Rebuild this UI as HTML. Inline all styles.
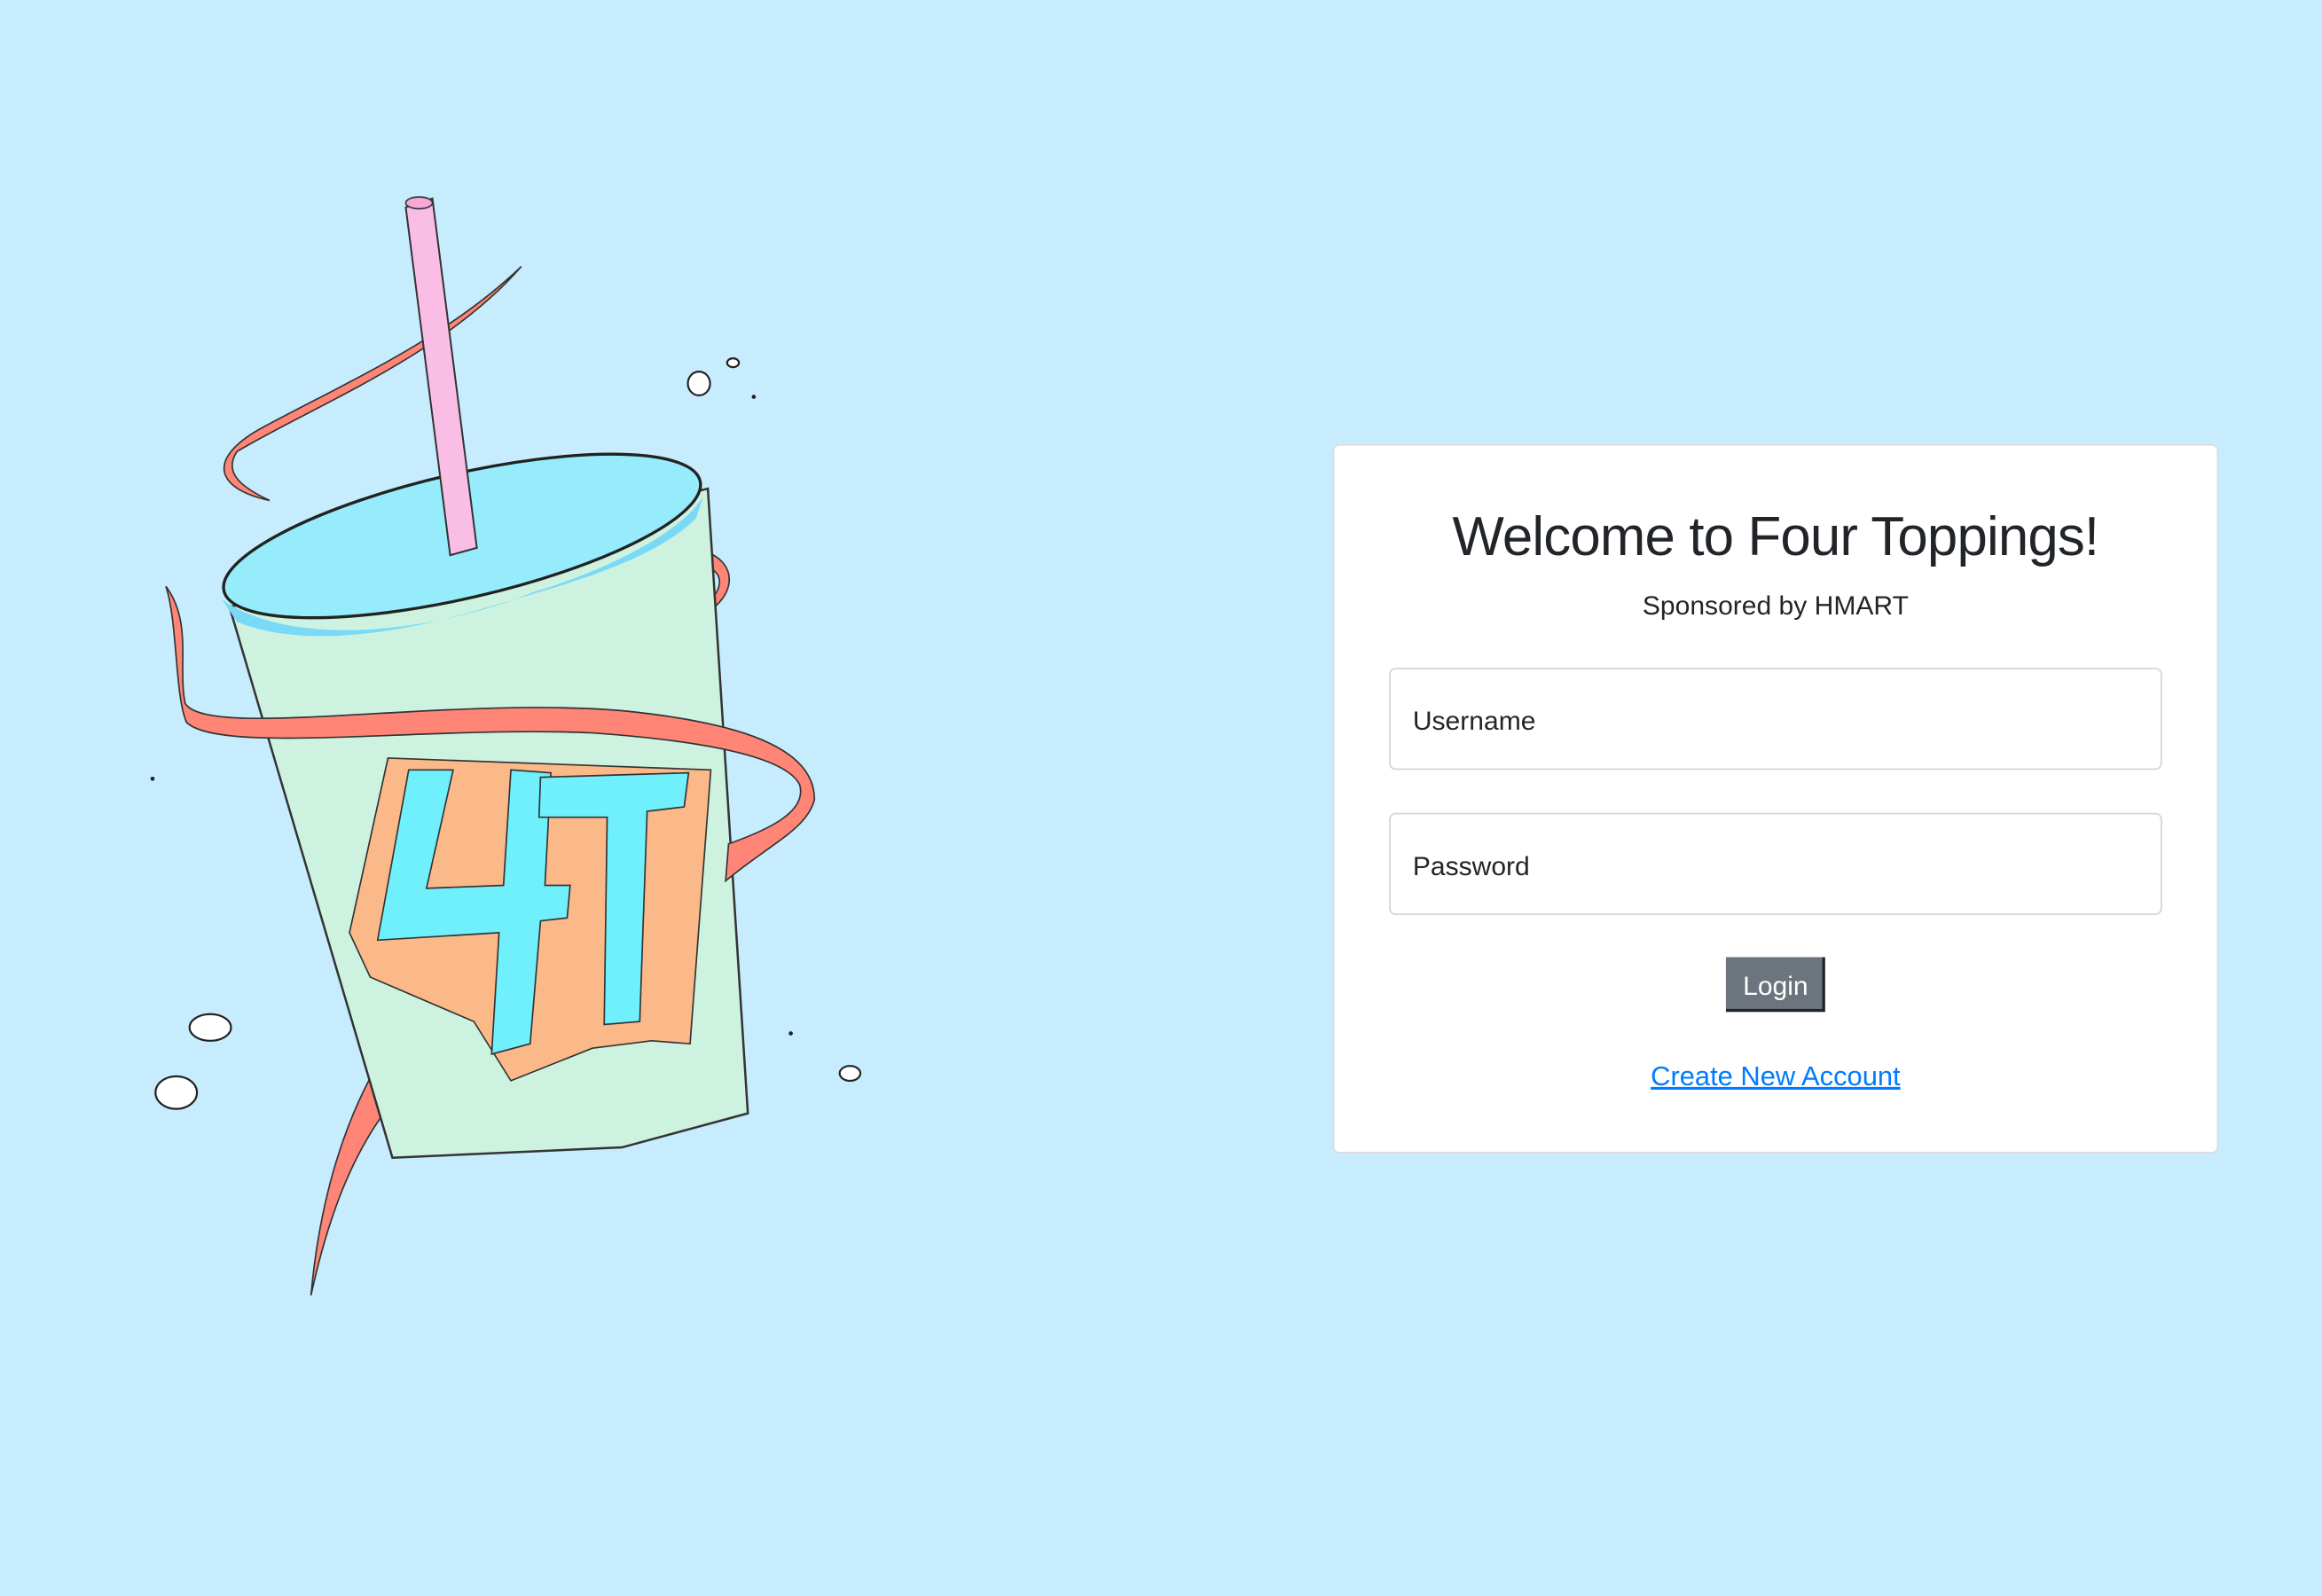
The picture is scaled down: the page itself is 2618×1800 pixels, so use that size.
<!DOCTYPE html>
<html><head><meta charset="utf-8"><style>
html,body{margin:0;padding:0;width:2618px;height:1800px;overflow:hidden;background:#c6ecfd}
svg{position:absolute;left:0;top:0}
text{font-family:"Liberation Sans",sans-serif}
</style></head><body>
<svg width="2618" height="1800" viewBox="0 0 1568 1078" xmlns="http://www.w3.org/2000/svg">
<rect width="1568" height="1078" fill="#c6ecfd"/>
<g fill="#fff" stroke="#222" stroke-width="1.3">
<ellipse cx="472" cy="259" rx="7.5" ry="8"/>
<ellipse cx="495" cy="245" rx="4" ry="3"/>
<ellipse cx="142" cy="694" rx="14" ry="9"/>
<ellipse cx="119" cy="738" rx="14" ry="11"/>
<ellipse cx="574" cy="725" rx="7" ry="5"/>
</g>
<g fill="#222"><circle cx="509" cy="268" r="1.4"/><circle cx="103" cy="526" r="1.4"/><circle cx="534" cy="698" r="1.4"/></g>
<path d="M352 180 C300 230 230 260 175 290 C140 310 145 330 182 338 C165 330 150 320 160 305 C210 275 300 240 352 180Z" fill="#ff8576" stroke="#333" stroke-width="1"/>
<path d="M475 372 C500 380 498 405 470 418 L474 410 C488 400 490 388 478 383Z" fill="#ff8576" stroke="#333" stroke-width="1"/>
<path d="M250 728 C228 770 215 820 210 875 C222 820 238 780 262 748Z" fill="#ff8576" stroke="#333" stroke-width="1"/>
<path d="M155 410 L478 330 L505 752 L420 775 L265 782 Z" fill="#cdf3e0" stroke="#333" stroke-width="1.5"/>
<ellipse cx="312" cy="362" rx="165" ry="42" transform="rotate(-13 312 362)" fill="#96ecfb" stroke="#222" stroke-width="2"/>
<path d="M150 405 C200 440 300 425 360 400 C410 385 460 360 475 335 L470 350 C440 380 380 395 330 410 C280 425 210 440 160 420Z" fill="#7ad9f7"/>
<path d="M274 140 L292 134 L322 370 L304 375 Z" fill="#f9bde6" stroke="#333" stroke-width="1.2"/>
<ellipse cx="283" cy="137" rx="9" ry="4" fill="#f6a9d9" stroke="#333" stroke-width="1"/>
<path d="M262 512 L480 520 L466 705 L440 703 L400 708 L345 730 L320 690 L250 660 L236 630 Z" fill="#fbb989" stroke="#333" stroke-width="1"/>
<path d="M276 520 L306 520 L288 600 L340 598 L345 520 L372 522 L368 598 L385 598 L383 620 L365 622 L358 705 L332 712 L337 630 L255 635 Z" fill="#6ff0fc" stroke="#333" stroke-width="1"/>
<path d="M365 525 L465 522 L462 545 L437 548 L432 690 L408 692 L410 552 L364 552 Z" fill="#6ff0fc" stroke="#333" stroke-width="1"/>
<path d="M112 396 C130 420 120 450 125 475 C140 500 300 470 420 480 C500 488 550 505 550 540 C545 560 520 570 490 595 L492 570 C520 560 545 548 540 530 C530 510 470 500 400 495 C290 490 150 510 126 488 C118 470 120 420 112 396Z" fill="#ff8576" stroke="#333" stroke-width="1"/>
<rect x="900.5" y="300.5" width="597" height="478" rx="4" fill="#fff" stroke="#dcdcdc" stroke-width="1"/>
<text x="1199" y="375" text-anchor="middle" font-size="37" letter-spacing="-0.5" fill="#212529">Welcome to Four Toppings!</text>
<text x="1199" y="415" text-anchor="middle" font-size="18" fill="#212529">Sponsored by HMART</text>
<rect x="938.5" y="451.5" width="521" height="68" rx="4" fill="#fff" stroke="#ced4da" stroke-width="1"/>
<text x="954" y="493" font-size="18" fill="#212529">Username</text>
<rect x="938.5" y="549.5" width="521" height="68" rx="4" fill="#fff" stroke="#ced4da" stroke-width="1"/>
<text x="954" y="591" font-size="18" fill="#212529">Password</text>
<rect x="1165.5" y="646.5" width="67" height="37" fill="#212529"/>
<rect x="1165.5" y="646.5" width="65" height="35" fill="#6c757d"/>
<text x="1199" y="672" text-anchor="middle" font-size="18" fill="#fff">Login</text>
<text x="1199" y="733" text-anchor="middle" font-size="18.5" fill="#007bff" text-decoration="underline">Create New Account</text>
</svg>
</body></html>
